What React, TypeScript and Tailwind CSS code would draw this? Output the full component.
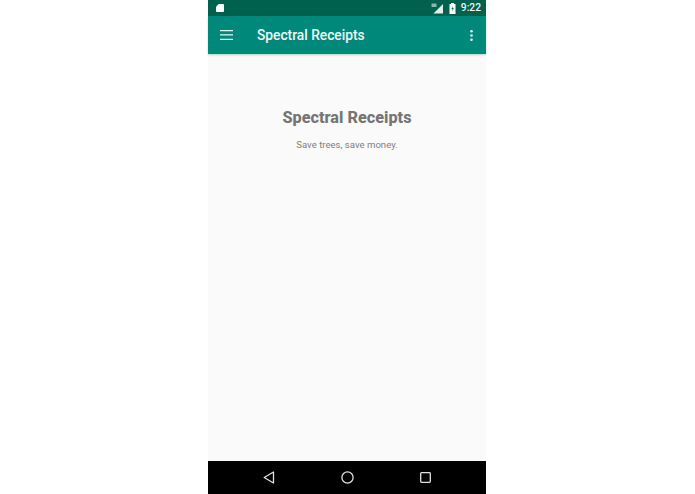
const App = () => {
    return (
        <div className="flex h-[494px] w-[694px] justify-center bg-white font-['Roboto',sans-serif]">
            <div className="flex w-[278px] flex-col bg-[#fafafa]">
                <div className="flex h-4 items-center justify-between bg-[#00614f] pl-2 pr-[5px] text-white">
                    <svg width="8" height="10" viewBox="0 0 9 10" fill="#fff">
                        <path d="M3 .5h5a1 1 0 0 1 1 1v7a1 1 0 0 1-1 1H1a1 1 0 0 1-1-1V3.500z" />
                    </svg>
                    <div className="flex items-center">
                        <svg width="13" height="11" viewBox="0 0 12 11" fill="#e4efec">
                            <path d="M11.500 1v9.500H2z" />
                            <path d="M0 .5h5v3.500H0z" opacity=".6" />
                        </svg>
                        <svg className="ml-[5px]" width="7" height="11" viewBox="0 0 7 11" fill="#fff">
                            <path d="M2 0h3v1h1.500v10H.500V1H2z" />
                            <path d="M4 3 2.500 6H3.500L3 8.500 4.800 5H3.700z" fill="#00614f" />
                        </svg>
                        <span className="ml-[5px] text-[10.250px] font-medium leading-none text-[#eef5f3]">9:22</span>
                    </div>
                </div>
                <div className="flex h-[38px] items-center bg-[#00897b] pl-3 pr-3 shadow-[0_1px_2px_rgba(0,0,0,0.2)]">
                    <svg width="13" height="10" viewBox="0 0 13 10" fill="#e6f3f1">
                        <path d="M0 0h13v1.300H0zM0 4.300h13v1.300H0zM0 8.700h13V10H0z" />
                    </svg>
                    <span className="ml-[24px] text-[13.750px] font-medium text-[#f0f8f6]">Spectral Receipts</span>
                    <svg className="ml-auto mr-[1.500px]" width="3" height="11" viewBox="0 0 3 11" fill="#e6f3f1">
                        <circle cx="1.500" cy="1.300" r="1.300" />
                        <circle cx="1.500" cy="5.500" r="1.300" />
                        <circle cx="1.500" cy="9.700" r="1.300" />
                    </svg>
                </div>
                <div className="flex flex-1 flex-col items-center pt-[54px]">
                    <h1 className="text-[16.250px] font-extrabold leading-5 text-[#757575]">Spectral Receipts</h1>
                    <p className="mt-[10px] text-[9.600px] leading-[14px] text-[#808080]">Save trees, save money.</p>
                </div>
                <div className="flex h-[33px] items-center justify-between bg-black pl-[55px] pr-[55px]">
                    <svg width="12" height="13" viewBox="0 0 12 13" fill="none" stroke="#e0e0e0" strokeWidth="1.300">
                        <path d="M10.500 1v11L1.200 6.500z" strokeLinejoin="round" />
                    </svg>
                    <svg width="13" height="13" viewBox="0 0 13 13" fill="none" stroke="#e0e0e0" strokeWidth="1.300">
                        <circle cx="6.500" cy="6.500" r="5.600" />
                    </svg>
                    <svg width="11" height="11" viewBox="0 0 11 11" fill="none" stroke="#e0e0e0" strokeWidth="1.300">
                        <rect x=".7" y=".7" width="9.600" height="9.600" rx=".8" />
                    </svg>
                </div>
            </div>
        </div>
    )
}

export default App
